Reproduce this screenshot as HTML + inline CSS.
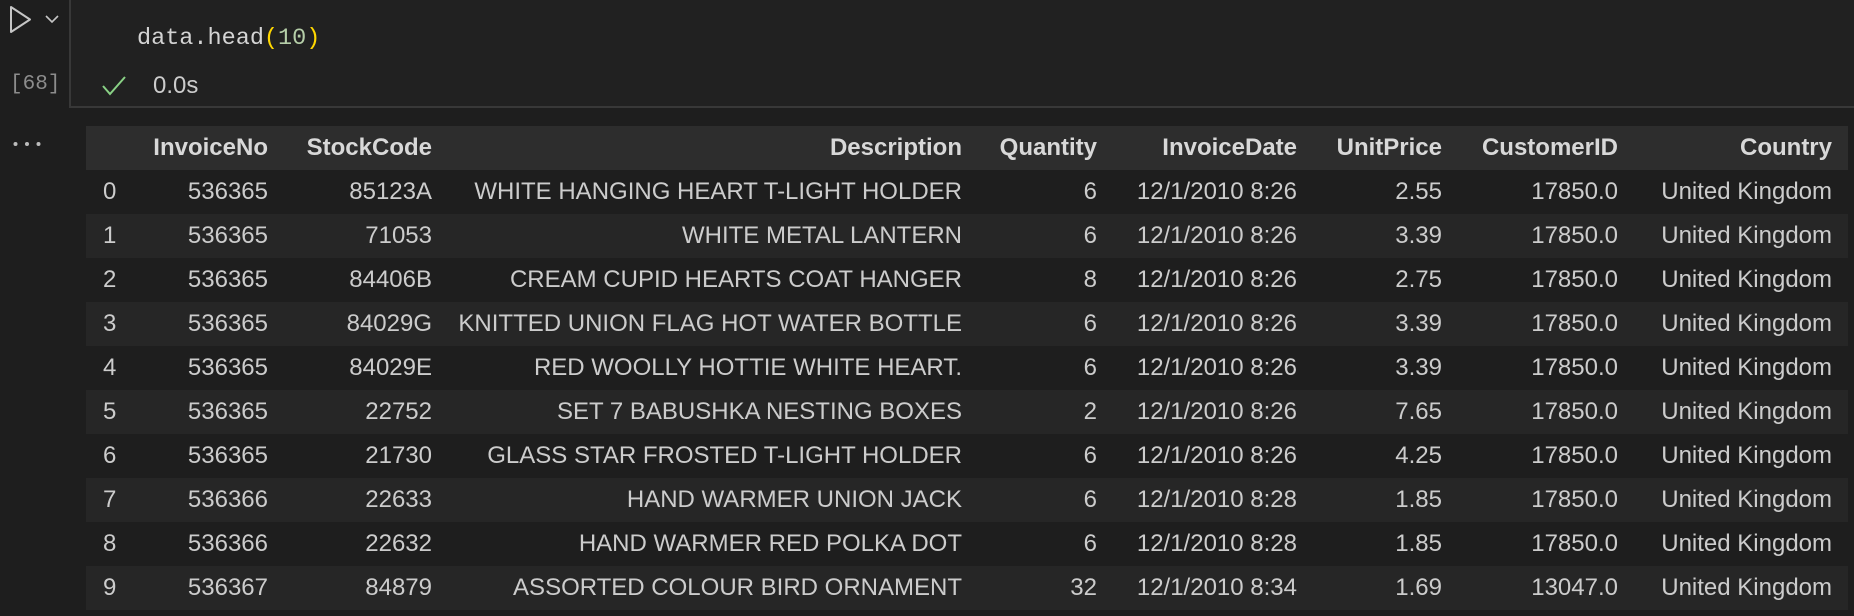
<!DOCTYPE html>
<html><head><meta charset="utf-8"><style>
html,body{margin:0;padding:0;width:1854px;height:616px;background:#1e1e1e;overflow:hidden;font-family:"Liberation Sans",sans-serif;color:#cccccc;}
.abs{position:absolute;}
.editor{position:absolute;left:69px;top:0;width:1785px;height:106px;background:#212121;border-left:2px solid #383838;border-bottom:2px solid #383838;}
.code{position:absolute;left:137px;top:25px;font-family:"Liberation Mono",monospace;font-size:23.5px;color:#d4d4d4;}
.row{position:absolute;left:86px;width:1762px;height:44px;}
.row span{position:absolute;top:9px;font-size:24px;line-height:26px;white-space:nowrap;}
.hdr{background:#2d2d2d;}
.hdr span{font-weight:bold;color:#d8d8d8;}
.odd{background:#262626;}
</style></head><body>
<svg class="abs" style="left:8px;top:4px" width="60" height="32">
<path d="M3 3 L3 28 L22 15.5 Z" fill="none" stroke="#c5c5c5" stroke-width="2" stroke-linejoin="round"/>
<path d="M38 12 L44 18 L50 12" fill="none" stroke="#c5c5c5" stroke-width="1.6"/>
</svg>
<div class="abs" style="left:10px;top:73px;font-family:'Liberation Mono',monospace;font-size:21px;color:#8c8c8c;">[68]</div>
<svg class="abs" style="left:12px;top:140px" width="30" height="8"><circle cx="3.5" cy="4" r="2" fill="#bbb"/><circle cx="15" cy="4" r="2" fill="#bbb"/><circle cx="26.5" cy="4" r="2" fill="#bbb"/></svg>
<div class="editor"></div>
<div class="code">data.head<span style="color:#ffd700">(</span><span style="color:#b5cea8">10</span><span style="color:#ffd700">)</span></div>
<svg class="abs" style="left:101px;top:74px" width="28" height="24"><path d="M2 12 L9 20 L24 3" fill="none" stroke="#89d185" stroke-width="2"/></svg>
<div class="abs" style="left:153px;top:72px;font-size:24px;color:#cccccc;">0.0s</div>
<div id="t"></div>
<script>
var data=[
["","InvoiceNo","StockCode","Description","Quantity","InvoiceDate","UnitPrice","CustomerID","Country"],
["0","536365","85123A","WHITE HANGING HEART T-LIGHT HOLDER","6","12/1/2010 8:26","2.55","17850.0","United Kingdom"],
["1","536365","71053","WHITE METAL LANTERN","6","12/1/2010 8:26","3.39","17850.0","United Kingdom"],
["2","536365","84406B","CREAM CUPID HEARTS COAT HANGER","8","12/1/2010 8:26","2.75","17850.0","United Kingdom"],
["3","536365","84029G","KNITTED UNION FLAG HOT WATER BOTTLE","6","12/1/2010 8:26","3.39","17850.0","United Kingdom"],
["4","536365","84029E","RED WOOLLY HOTTIE WHITE HEART.","6","12/1/2010 8:26","3.39","17850.0","United Kingdom"],
["5","536365","22752","SET 7 BABUSHKA NESTING BOXES","2","12/1/2010 8:26","7.65","17850.0","United Kingdom"],
["6","536365","21730","GLASS STAR FROSTED T-LIGHT HOLDER","6","12/1/2010 8:26","4.25","17850.0","United Kingdom"],
["7","536366","22633","HAND WARMER UNION JACK","6","12/1/2010 8:28","1.85","17850.0","United Kingdom"],
["8","536366","22632","HAND WARMER RED POLKA DOT","6","12/1/2010 8:28","1.85","17850.0","United Kingdom"],
["9","536367","84879","ASSORTED COLOUR BIRD ORNAMENT","32","12/1/2010 8:34","1.69","13047.0","United Kingdom"]];
var edges=[268,432,962,1097,1297,1442,1618,1832];
var h="";
data.forEach(function(r,i){
 var cls=i==0?"hdr":(i%2==0?"odd":"");
 h+='<div class="row '+cls+'" style="top:'+(126+44*i)+'px">';
 h+='<span style="left:17px">'+r[0]+'</span>';
 for(var c=1;c<9;c++){h+='<span style="right:'+(1848-edges[c-1])+'px">'+r[c]+'</span>';}
 h+='</div>';
});
document.getElementById("t").innerHTML=h;
</script>
</body></html>
